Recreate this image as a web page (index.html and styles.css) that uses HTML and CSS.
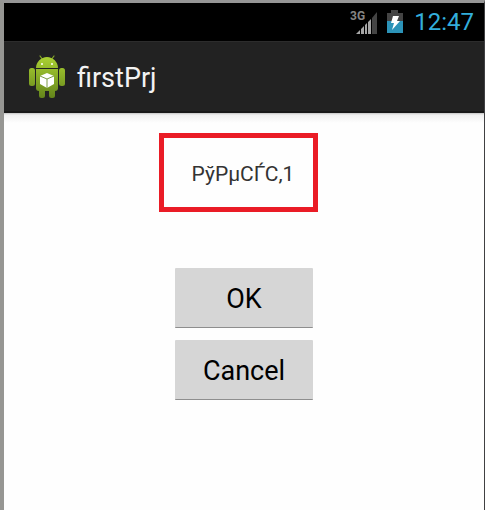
FILE: index.html
```
<!DOCTYPE html>
<html lang="en">
<head>
    <meta charset="UTF-8">
    <meta name="viewport" content="width=device-width, initial-scale=1.0">
    <title>firstPrj</title>
    <link rel="stylesheet" href="styles.css">
</head>
<body>
    <div class="screen">
        <div class="status-bar">
            <svg class="signal" width="28" height="26" viewBox="0 -2 28 26" role="img" aria-label="3G signal">
                <path fill="#a6a6a6" d="M6 23l4-4v4zM11 18l3-3v8h-3zM15 14l2-2v11h-2zM18 11l3-3v15h-3z"/>
                <path fill="#444" d="M22 7l5-6v22h-5z"/>
                <text class="network" x="0" y="9">3G</text>
            </svg>
            <svg class="battery" width="16" height="24" viewBox="0 0 16 24" role="img" aria-label="Battery charging">
                <path fill="#444" d="M4 0h7v3h5v9H0V3h4z"/>
                <path fill="#2c93b8" d="M0 11h16v12H0z"/>
                <path fill="#fff" d="M6 6h6l-2 5h3l-8 9 2-7H4z"/>
            </svg>
            <span class="clock">12:47</span>
        </div>

        <header class="action-bar">
            <svg class="app-icon" width="36" height="44" viewBox="0 0 36 44" aria-hidden="true">
                <defs>
                    <linearGradient id="green" gradientUnits="userSpaceOnUse" x1="0" y1="3" x2="0" y2="43">
                        <stop offset="0" stop-color="#a9cf32"/>
                        <stop offset="1" stop-color="#64851b"/>
                    </linearGradient>
                </defs>
                <path stroke="#86a82a" stroke-width="1.2" stroke-linecap="round" d="M11 1l3 4M25 1l-3 4"/>
                <g fill="url(#green)">
                    <path d="M7 13C7 7 12 2 18 2s11 5 11 11z"/>
                    <rect x="0" y="13" width="6" height="18" rx="2.5"/>
                    <rect x="30" y="13" width="6" height="18" rx="2.5"/>
                    <rect x="10" y="32" width="6" height="11" rx="2.5"/>
                    <rect x="20" y="32" width="6" height="11" rx="2.5"/>
                    <path d="M7 14h22v19q0 3-3 3H10q-3 0-3-3z"/>
                </g>
                <circle cx="13" cy="9" r="1" fill="#fff"/>
                <circle cx="23" cy="9" r="1" fill="#fff"/>
                <path fill="#fff" d="M18 18l7 3v8l-7 4-7-4v-8z"/>
                <path fill="none" stroke="#7d9c45" d="M11 21l7 3 7-3M18 24v9"/>
            </svg>
            <h1 class="title">firstPrj</h1>
        </header>

        <main class="content">
            <p class="message">РўРµСЃС‚1</p>
            <button type="button" class="button">OK</button>
            <button type="button" class="button">Cancel</button>
        </main>
    </div>
</body>
</html>
```

FILE: styles.css
```
* {
    box-sizing: border-box;
}
body {
    margin: 0;
    font-family: Roboto, "Noto Sans", sans-serif;
    background: #fefefe;
}
.screen {
    display: flex;
    flex-direction: column;
    min-height: 100vh;
    border-top: 3px solid #969696;
    border-left: 4px solid #969693;
    border-right: 1px solid #404042;
}
.status-bar {
    display: flex;
    align-items: center;
    justify-content: flex-end;
    height: 38px;
    padding-right: 10px;
    background: #000;
}
.signal {
    margin-right: 9px;
}
.network {
    font-size: 12px;
    font-weight: 700;
    fill: #858585;
}
.battery {
    margin-right: 11px;
}
.clock {
    font-size: 24px;
    line-height: 40px;
    color: #33aedb;
}
.action-bar {
    display: flex;
    align-items: center;
    gap: 12px;
    height: 72px;
    padding-left: 25px;
    background: #222;
    border-top: 1px solid #2c2c2c;
    border-bottom: 2px solid #181818;
}
.title {
    margin: 0;
    padding-top: 2px;
    font-size: 27px;
    font-weight: 400;
    color: #f3f3f3;
}
.content {
    flex: 1;
    display: flex;
    flex-direction: column;
    align-items: center;
    gap: 12px;
    padding-top: 49px;
    background: linear-gradient(#c4c4c4, #f0f0f0 2px, #fefefe 10px);
}
.message {
    position: relative;
    margin: 0 0 69px;
    padding-right: 2px;
    font-size: 21px;
    line-height: 25px;
    color: #333;
}
/* red frame around the message */
.message::after {
    content: "";
    position: absolute;
    inset: -29px -22px -25px -33px;
    border: 5px solid #ea1c26;
}
.button {
    width: 138px;
    height: 60px;
    padding: 2px 0 0;
    font-family: inherit;
    font-size: 27px;
    color: #000;
    background: #d6d6d6;
    border: 0;
    border-bottom: 1px solid #8e8e8e;
    border-radius: 1px;
}
.button:active {
    background: #99d6ec;
}
```
